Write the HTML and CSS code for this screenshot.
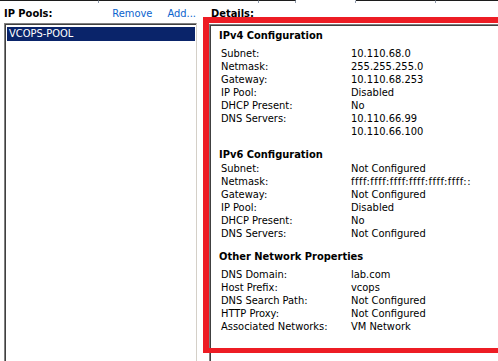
FILE: index.html
```html
<!DOCTYPE html>
<html lang="en">
<head>
  <meta charset="UTF-8" />
  <title>IP Pools</title>
  <link rel="stylesheet" href="styles.css">
</head>
<body>

<div class="topline">
  <span class="seg"></span>
  <span class="seg"></span>
  <span class="seg"></span>
  <span class="seg gap"></span>
  <span class="seg"></span>
  <span class="seg"></span>
</div>

<div class="main">
  <div class="pools">
    <div class="pools-head">
      <span class="title">IP Pools:</span>
      <div class="links">
        <a href="#">Remove</a>
        <a href="#">Add...</a>
      </div>
    </div>
    <div class="listbox">
      <div class="item selected">VCOPS-POOL</div>
    </div>
  </div>

  <div class="details">
    <div class="details-head">Details:</div>
    <div class="panel">
      <div class="section ipv4">
        <h3>IPv4 Configuration</h3>
        <div class="row"><span class="k">Subnet:</span><span>10.110.68.0</span></div>
        <div class="row"><span class="k">Netmask:</span><span>255.255.255.0</span></div>
        <div class="row"><span class="k">Gateway:</span><span>10.110.68.253</span></div>
        <div class="row"><span class="k">IP Pool:</span><span>Disabled</span></div>
        <div class="row"><span class="k">DHCP Present:</span><span>No</span></div>
        <div class="row"><span class="k">DNS Servers:</span><span>10.110.66.99</span></div>
        <div class="row"><span class="k"></span><span>10.110.66.100</span></div>
      </div>
      <div class="section ipv6">
        <h3>IPv6 Configuration</h3>
        <div class="row"><span class="k">Subnet:</span><span>Not Configured</span></div>
        <div class="row"><span class="k">Netmask:</span><span class="mask">ffff:ffff:ffff:ffff:ffff:ffff::</span></div>
        <div class="row"><span class="k">Gateway:</span><span>Not Configured</span></div>
        <div class="row"><span class="k">IP Pool:</span><span>Disabled</span></div>
        <div class="row"><span class="k">DHCP Present:</span><span>No</span></div>
        <div class="row"><span class="k">DNS Servers:</span><span>Not Configured</span></div>
      </div>
      <div class="section other">
        <h3>Other Network Properties</h3>
        <div class="row"><span class="k">DNS Domain:</span><span>lab.com</span></div>
        <div class="row"><span class="k">Host Prefix:</span><span>vcops</span></div>
        <div class="row"><span class="k">DNS Search Path:</span><span>Not Configured</span></div>
        <div class="row"><span class="k">HTTP Proxy:</span><span>Not Configured</span></div>
        <div class="row"><span class="k">Associated Networks:</span><span>VM Network</span></div>
      </div>
    </div>
  </div>
</div>

<div class="annot"></div>

</body>
</html>
```

FILE: styles.css
```css
body {
  margin: 0;
  width: 498px;
  height: 361px;
  overflow: hidden;
  position: relative;
  background: #fff;
  color: #000;
  font-family: Tahoma, "DejaVu Sans Condensed", "DejaVu Sans", sans-serif;
  font-size: 11px;
}

/* cut-off column header line at the very top */
.topline {
  display: flex;
  height: 3px;
}
.seg {
  box-sizing: border-box;
  height: 3px;
  border-top: 1px solid #1c1c1c;
  border-right: 1px solid #8d99ab;
}
.seg:nth-child(1) { width: 99px; }
.seg:nth-child(2) { width: 160px; }
.seg:nth-child(3) { width: 37px; }
.seg.gap { width: 60px; border-top-color: #fff; }
.seg:nth-child(5) { width: 80px; }
.seg:nth-child(6) { flex: 1; border-right: none; }

.main {
  display: flex;
  height: 358px;
}

/* left: pool list */
.pools {
  width: 197px;
  padding-left: 4px;
  box-sizing: border-box;
  display: flex;
  flex-direction: column;
}
.pools-head {
  height: 20px;
  padding-top: 4px;
  box-sizing: border-box;
  display: flex;
  line-height: 13px;
}
.title {
  font-weight: bold;
}
.links {
  margin-left: auto;
  display: flex;
  gap: 15px;
  padding-right: 1px;
}
.links a {
  color: #0b63ce;
  text-decoration: none;
}
.listbox {
  flex: 1;
  border-top: 1px solid #808080;
  border-left: 1px solid #808080;
  border-right: 1px solid #d4d0c8;
  box-shadow: inset 1px 1px 0 #404040;
  padding: 3px 1px 0 2px;
}
.item {
  height: 14px;
  line-height: 14px;
  padding-left: 2px;
}
.item.selected {
  background: #0a246a;
  color: #fff;
}

/* right: details panel */
.details {
  flex: 1;
  padding-left: 12px;
  display: flex;
  flex-direction: column;
}
.details-head {
  height: 21px;
  padding: 4px 0 0 2px;
  box-sizing: border-box;
  font-weight: bold;
  line-height: 13px;
}
.panel {
  flex: 1;
  border-top: 1px solid #808080;
  border-left: 1px solid #808080;
  box-shadow: inset 1px 1px 0 #404040;
  padding: 4px 0 0 9px;
}
.section h3 {
  margin: 0;
  font-size: 11px;
  line-height: 13px;
}
.section + .section {
  margin-top: 10px;
}
.ipv4 h3 { margin-bottom: 5px; }
.ipv6 h3 { margin-bottom: 1px; }
.other h3 { margin-bottom: 5px; }
.row {
  display: flex;
  line-height: 13px;
  padding-left: 2px;
  white-space: nowrap;
}
.row .k {
  width: 130px;
  flex: none;
}
.mask {
  letter-spacing: 0.5px;
}

/* red highlight drawn over the screenshot */
.annot {
  position: absolute;
  left: 203px;
  top: 17px;
  width: 300px;
  height: 325px;
  border: solid #ed1c24;
  border-width: 6px 0 5px 6px;
}
```
